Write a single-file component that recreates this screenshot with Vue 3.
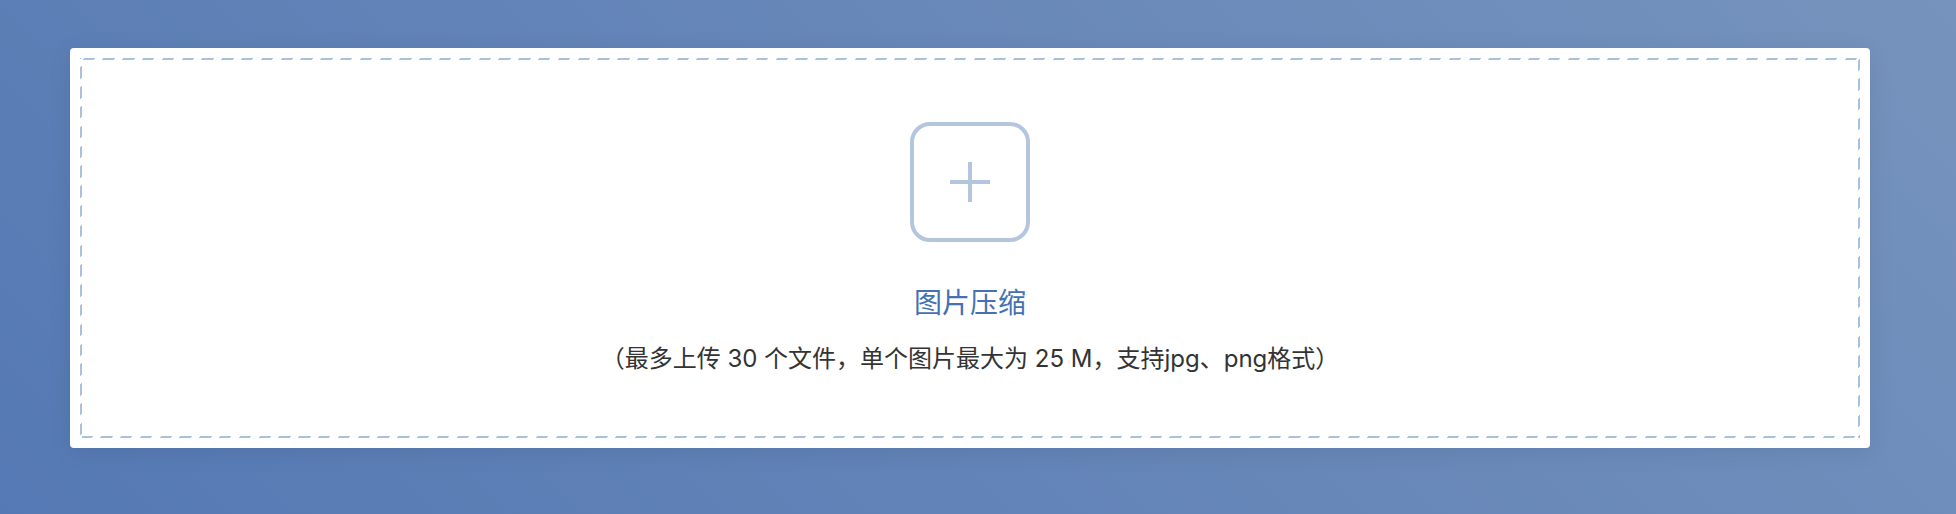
<script setup>
const title = '图片压缩'
const hint = '（最多上传 30 个文件，单个图片最大为 25 M，支持jpg、png格式）'
</script>

<template>
  <main class="page">
    <section class="card">
      <label class="dropzone">
        <input class="file" type="file" accept="image/jpeg,image/png" multiple />
        <svg class="plus" viewBox="0 0 120 120" aria-hidden="true">
          <rect x="2" y="2" width="116" height="116" rx="18" />
          <path d="M60 40V80M40 60H80" />
        </svg>
        <span class="title">{{ title }}</span>
        <span class="hint">{{ hint }}</span>
      </label>
    </section>
  </main>
</template>

<style>
body {
  margin: 0;
}
</style>

<style scoped>
.page {
  box-sizing: border-box;
  min-height: 100vh;
  padding: 48px 86px 66px 70px;
  background: linear-gradient(45deg, #5579b4, #7693bd);
  font-family: Inter, "Noto Sans CJK SC", sans-serif;
}

.card {
  padding: 10px;
  border-radius: 4px;
  background: #fff;
  box-shadow: 0 4px 24px rgba(0, 0, 0, 0.08);
}

.dropzone {
  position: relative;
  display: flex;
  flex-direction: column;
  align-items: center;
  padding: 62px 20px 59px;
  border: 2px solid transparent;
  background:
    linear-gradient(#fff, #fff) padding-box,
    repeating-linear-gradient(135deg, #abbfdf 0, #abbfdf 8px, #fff 8px, #fff 14px);
  background-clip: padding-box, border-box;
  cursor: pointer;
}

.file {
  position: absolute;
  inset: 0;
  width: 100%;
  height: 100%;
  opacity: 0;
  cursor: pointer;
}

.plus {
  width: 120px;
  height: 120px;
  fill: none;
  stroke: #b4c5e0;
  stroke-width: 4;
}

.title {
  margin-top: 41px;
  font-size: 28px;
  line-height: 40px;
  color: #4570b4;
}

.hint {
  margin-top: 18px;
  font-size: 24px;
  line-height: 36px;
  color: #333;
}
</style>
